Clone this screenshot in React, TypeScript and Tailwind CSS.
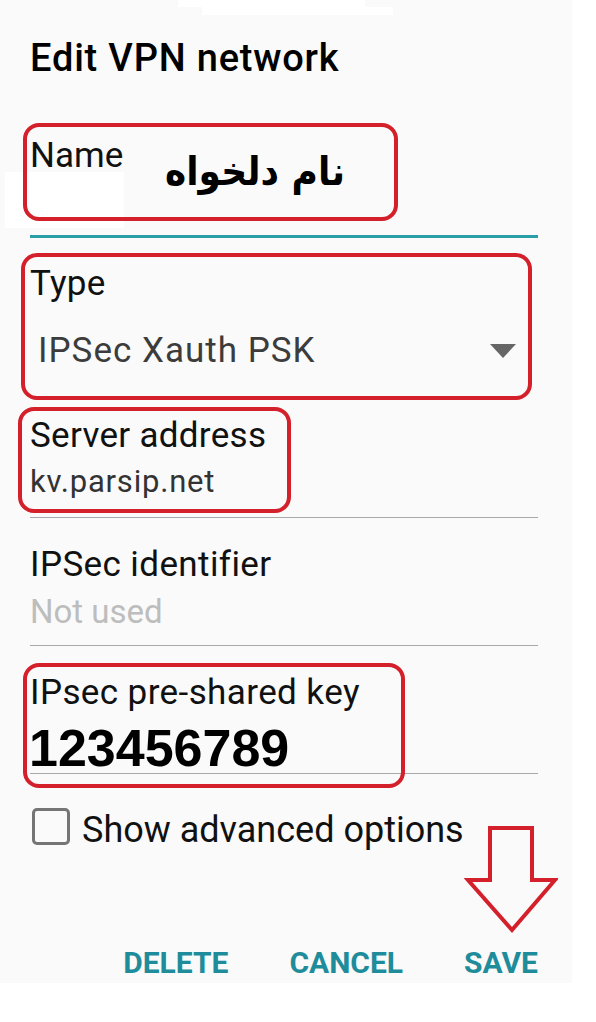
import React from 'react';

// red annotation frames drawn over the dialog
const frames = [
  { key: 'name', cls: 'left-[23px] top-[123px] w-[375px] h-[98px]' },
  { key: 'type', cls: 'left-[21px] top-[253px] w-[511px] h-[147px]' },
  { key: 'server', cls: 'left-[18px] top-[407px] w-[273px] h-[106px]' },
  { key: 'psk', cls: 'left-[23px] top-[663px] w-[382px] h-[125px]' },
];

export default function App() {
  return (
    <div className="relative w-[596px] h-[1022px] bg-white overflow-hidden" style={{ fontFamily: 'Roboto, "Noto Sans", sans-serif' }}>
      <div className="flex flex-col w-[572px] h-[983px] bg-[#fafafa] pl-[30px] pr-[34px] pt-[36px] text-[#111]">
        <h1 className="text-[38px] leading-[44px] font-medium tracking-[0.8px] text-black">Edit VPN network</h1>

        {/* Name */}
        <div className="flex items-start h-[99px] mt-[56px]">
          <span className="w-[120px] text-[35px] leading-[40px]">Name</span>
          <span
            dir="rtl"
            className="w-[195px] mt-[12px] text-right text-[40px] leading-[46px] font-bold text-black"
            style={{ fontFamily: '"DejaVu Sans Condensed", "DejaVu Sans", sans-serif' }}
          >
            نام دلخواه
          </span>
        </div>
        <div className="h-[3px] bg-[#2a9ea6]" />

        {/* Type */}
        <div className="mt-[26px] text-[35px] leading-[40px] tracking-[0.3px]">Type</div>
        <div className="flex items-center justify-between mt-[27px] pl-[8px] pr-[22px]">
          <span className="text-[35px] leading-[40px] tracking-[1px] text-[#3c3c3c]">IPSec Xauth PSK</span>
          <svg width="26" height="14" viewBox="0 0 26 14">
            <path d="M0 0 L26 0 L13 14 Z" fill="#666" />
          </svg>
        </div>

        {/* Server address */}
        <div className="mt-[45px] text-[35px] leading-[40px] tracking-[0.3px]">Server address</div>
        <div className="mt-[8px] text-[31px] leading-[36px] tracking-[0.8px] text-[#333]">kv.parsip.net</div>
        <div className="mt-[17px] h-[1px] bg-[#a8a8a8]" />

        {/* IPSec identifier */}
        <div className="mt-[27px] text-[35px] leading-[40px] tracking-[0.4px]">IPSec identifier</div>
        <div className="mt-[8px] text-[33px] leading-[38px] text-[#bdbdbd]">Not used</div>
        <div className="mt-[14px] h-[1px] bg-[#a8a8a8]" />

        {/* Pre-shared key */}
        <div className="mt-[27px] text-[35px] leading-[40px] tracking-[0.4px]">IPsec pre-shared key</div>
        <div
          className="mt-[10px] ml-[-1px] text-[52px] leading-[50px] font-bold text-black"
          style={{ fontFamily: '"Liberation Sans", Arial, sans-serif' }}
        >
          123456789
        </div>
        <div className="h-[1px] bg-[#a8a8a8]" />

        {/* advanced options */}
        <div className="flex items-start gap-[12px] mt-[34px] pl-[2px]">
          <div className="w-[38px] h-[37px] border-[3px] border-[#757575] rounded-[5px]" />
          <span className="mt-[1px] text-[36px] leading-[42px]">Show advanced options</span>
        </div>

        {/* buttons */}
        <div className="flex justify-end gap-[61px] mt-[94px] text-[30px] leading-[36px] font-bold text-[#1f8c9b]">
          <span>DELETE</span>
          <span>CANCEL</span>
          <span>SAVE</span>
        </div>
      </div>

      {/* white paint-over patches */}
      <div className="absolute left-[178px] top-0 w-[187px] h-[7px] bg-white" />
      <div className="absolute left-[202px] top-[7px] w-[191px] h-[8px] bg-white" />
      <div className="absolute left-[5px] top-[172px] w-[119px] h-[56px] bg-white" />

      {frames.map((f) => (
        <div key={f.key} className={`absolute ${f.cls} border-4 border-[#d4202a] rounded-[16px]`} />
      ))}

      <svg className="absolute left-[464px] top-[826px]" width="94" height="108" viewBox="0 0 94 108">
        <path d="M26 2 L68 2 L68 54 L91 54 L48 104 L4 54 L26 54 Z" fill="none" stroke="#d4202a" strokeWidth="4" strokeLinejoin="miter" />
      </svg>
    </div>
  );
}
